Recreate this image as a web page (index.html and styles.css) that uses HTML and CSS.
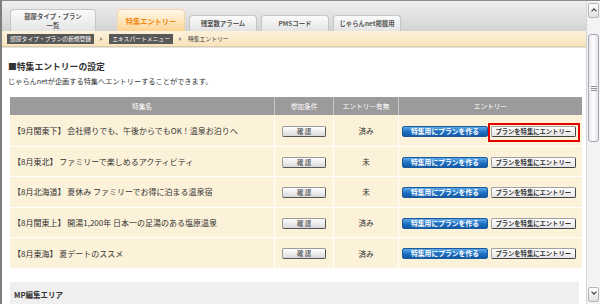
FILE: index.html
```html
<!DOCTYPE html>
<html lang="ja">
<head>
    <meta charset="UTF-8">
    <title>特集エントリー</title>
    <link rel="stylesheet" href="styles.css">
</head>
<body>
    <div class="window">
        <div class="page">
            <!-- 上部リンク (スクロールで一部隠れている) -->
            <div class="topline"><a href="#">ホームページへ　ログアウト</a></div>

            <!-- タブ -->
            <div class="tabs">
                <div class="tab tab-tall">部屋タイプ・プラン<br>一覧</div>
                <div class="tab tab-active">特集エントリー</div>
                <div class="tab">残室数アラーム</div>
                <div class="tab">PMSコード</div>
                <div class="tab">じゃらんnet掲載用</div>
            </div>

            <!-- パンくず -->
            <div class="crumbs">
                <span class="crumb">部屋タイプ・プランの新規登録</span>
                <span class="crumb-arrow"></span>
                <span class="crumb">エキスパートメニュー</span>
                <span class="crumb-arrow"></span>
                <span class="crumb-current">特集エントリー</span>
            </div>

            <div class="content">
                <h2 class="title">■特集エントリーの設定</h2>
                <p class="lead">じゃらんnetが企画する特集へエントリーすることができます。</p>

                <table class="entry-table">
                    <thead>
                        <tr>
                            <th class="col-name">特集名</th>
                            <th class="col-cond">参加条件</th>
                            <th class="col-status">エントリー有無</th>
                            <th class="col-entry">エントリー</th>
                        </tr>
                    </thead>
                    <tbody>
                        <tr>
                            <td class="name">【9月関東下】 会社帰りでも、午後からでもOK！温泉お泊りへ</td>
                            <td class="center"><button class="btn-check">確 認</button></td>
                            <td class="center">済み</td>
                            <td class="entry">
                                <button class="btn-blue">特集用にプランを作る</button>
                                <button class="btn-white highlight">プランを特集にエントリー</button>
                            </td>
                        </tr>
                        <tr>
                            <td class="name">【8月東北】 ファミリーで楽しめるアクティビティ</td>
                            <td class="center"><button class="btn-check">確 認</button></td>
                            <td class="center">未</td>
                            <td class="entry">
                                <button class="btn-blue">特集用にプランを作る</button>
                                <button class="btn-white">プランを特集にエントリー</button>
                            </td>
                        </tr>
                        <tr>
                            <td class="name">【8月北海道】 夏休み ファミリーでお得に泊まる温泉宿</td>
                            <td class="center"><button class="btn-check">確 認</button></td>
                            <td class="center">未</td>
                            <td class="entry">
                                <button class="btn-blue">特集用にプランを作る</button>
                                <button class="btn-white">プランを特集にエントリー</button>
                            </td>
                        </tr>
                        <tr>
                            <td class="name">【8月関東上】 開湯1,200年 日本一の足湯のある塩原温泉</td>
                            <td class="center"><button class="btn-check">確 認</button></td>
                            <td class="center">済み</td>
                            <td class="entry">
                                <button class="btn-blue">特集用にプランを作る</button>
                                <button class="btn-white">プランを特集にエントリー</button>
                            </td>
                        </tr>
                        <tr>
                            <td class="name">【8月東海】 夏デートのススメ</td>
                            <td class="center"><button class="btn-check">確 認</button></td>
                            <td class="center">済み</td>
                            <td class="entry">
                                <button class="btn-blue">特集用にプランを作る</button>
                                <button class="btn-white">プランを特集にエントリー</button>
                            </td>
                        </tr>
                    </tbody>
                </table>

                <div class="mp-area">MP編集エリア</div>
            </div>
        </div>

        <!-- スクロールバー -->
        <div class="scrollbar">
            <div class="sb-btn sb-up"></div>
            <div class="sb-track">
                <div class="sb-thumb"><span class="sb-grip"></span></div>
            </div>
            <div class="sb-btn sb-down"></div>
        </div>
    </div>
</body>
</html>
```

FILE: styles.css
```css
/* Genel */
body {
    margin: 0;
    padding: 0;
    overflow: hidden;
    font-family: "Noto Sans CJK JP", "Noto Sans", sans-serif;
    color: #333;
    background-color: #fff;
}

.window {
    display: flex;
    height: 304px;
    border-top: 1px solid #8a8a8a;
    border-left: 2px solid #7d7d7d;
    box-sizing: border-box;
}

.page {
    flex: 1;
    overflow: hidden;
    background: linear-gradient(#efefef, #d3d3d3) no-repeat;
    background-size: 100% 30px;
}

/* Üst link */
.topline {
    height: 3px;
    overflow: hidden;
    text-align: right;
    padding-right: 2px;
}

.topline a {
    display: inline-block;
    margin-top: -6px;
    font-size: 7px;
    line-height: 8px;
    color: #2a6fc9;
}

/* Sekmeler */
.tabs {
    display: flex;
    align-items: flex-end;
    gap: 4px;
    height: 27px;
    padding-left: 8px;
}

.tab {
    display: flex;
    align-items: center;
    justify-content: center;
    box-sizing: border-box;
    width: 68px;
    height: 16px;
    border: 1px solid #c6c6c6;
    border-bottom: none;
    border-radius: 4px 4px 0 0;
    background: linear-gradient(#fbfbfb, #e4e4e4);
    color: #555;
    font-size: 6.4px;
    font-weight: bold;
    text-align: center;
}

.tab-tall {
    width: 86px;
    height: 22px;
    line-height: 9px;
}

.tab-active {
    height: 22px;
    margin-left: 17px;
    border-color: #f1d6a6;
    background: linear-gradient(#fff8ea, #fcd494);
    color: #f28a12;
    font-size: 7.2px;
}

/* Breadcrumb */
.crumbs {
    display: flex;
    align-items: center;
    gap: 4px;
    height: 15px;
    padding-left: 5px;
    background: linear-gradient(#fcf1da, #f7e4bd);
    border-bottom: 1px solid #dccaa4;
}

.crumb {
    height: 10px;
    padding: 0 3px;
    background-color: #585858;
    color: #fff;
    font-size: 5.8px;
    line-height: 10px;
}

.crumb-arrow {
    width: 0;
    height: 0;
    margin: 0 2px;
    border-top: 2px solid transparent;
    border-bottom: 2px solid transparent;
    border-left: 3px solid #9a9a9a;
}

.crumb-current {
    font-size: 5.8px;
    color: #333;
}

/* İçerik */
.content {
    border-top: 1px solid #e2e2e2;
    padding: 0 0 0 6px;
    background-color: #fff;
}

.title {
    margin: 13px 0 0;
    font-size: 8.8px;
    line-height: 12px;
    font-weight: bold;
    color: #333;
}

.lead {
    margin: 2px 0 0;
    font-size: 7.2px;
    line-height: 12px;
}

/* Tablo */
.entry-table {
    width: 569px;
    margin: 10px 0 0 2px;
    border-collapse: separate;
    border-spacing: 0;
    table-layout: fixed;
}

.entry-table th {
    height: 18px;
    padding: 0;
    background-color: #9b9b9b;
    color: #fff;
    font-size: 6.7px;
    font-weight: normal;
    border-left: 1px solid #c9c9c9;
}

.entry-table th:first-child {
    border-left: none;
}

.col-name { width: 264px; }
.col-cond { width: 58px; }
.col-status { width: 64px; }
.col-entry { width: 183px; }

.entry-table td {
    height: 30.6px;
    padding: 0;
    box-sizing: border-box;
    background-color: #fcf1d9;
    border-top: 1px solid #fff;
    border-left: 1px solid #fff;
    font-size: 7.6px;
}

.entry-table td:first-child {
    border-left: none;
}

.entry-table tbody tr:first-child td {
    border-top: none;
}

.name {
    padding-left: 3px !important;
    font-size: 8px !important;
    white-space: nowrap;
}

.center {
    text-align: center;
}

.entry {
    padding-left: 3px !important;
    white-space: nowrap;
}

/* Düğmeler */
button {
    font-family: inherit;
    cursor: pointer;
    padding: 0;
    vertical-align: middle;
}

.btn-check {
    width: 44px;
    height: 11px;
    border: 1px solid #9a9a9a;
    border-right-color: #555;
    border-bottom-color: #555;
    border-radius: 2px;
    background: linear-gradient(#ffffff, #d9d9d9);
    color: #666;
    font-size: 6.4px;
    font-weight: bold;
    line-height: 9px;
}

.btn-blue {
    width: 86px;
    height: 11px;
    border: 1px solid #1a5a9c;
    border-radius: 2px;
    background: linear-gradient(#5fa9e8, #1d6fc0 55%, #1359a6);
    color: #fff;
    font-size: 6.8px;
    font-weight: bold;
    line-height: 9px;
}

.btn-white {
    position: relative;
    width: 85px;
    height: 11px;
    margin-left: 1px;
    border: 1px solid #a0a0a0;
    border-right-color: #444;
    border-bottom-color: #444;
    border-radius: 2px;
    background: linear-gradient(#ffffff, #e4e4e4);
    color: #333;
    font-size: 6.3px;
    font-weight: bold;
    line-height: 9px;
}

/* Kırmızı vurgu çerçevesi */
.highlight::after {
    content: "";
    position: absolute;
    left: -4px;
    top: -4px;
    right: -5px;
    bottom: -6px;
    border: 2px solid #e40000;
}

/* MP alanı */
.mp-area {
    width: 561px;
    margin: 14px 0 0 2px;
    padding: 7px 4px 0;
    height: 30px;
    background-color: #efefef;
    font-size: 7.5px;
    font-weight: bold;
    color: #333;
}

/* Kaydırma çubuğu */
.scrollbar {
    display: flex;
    flex-direction: column;
    width: 14px;
    background-color: #f3f3f3;
    border-left: 1px solid #d4d4d4;
    box-sizing: border-box;
}

.sb-btn {
    position: relative;
    height: 13px;
    margin: 2px 1px;
    border: 1px solid #b5b5b5;
    border-radius: 2px;
    background: linear-gradient(#ffffff, #e2e2e2);
}

.sb-up::after,
.sb-down::after {
    content: "";
    position: absolute;
    left: 3px;
    width: 3px;
    height: 3px;
    border-left: 1.5px solid #333;
    border-top: 1.5px solid #333;
}

.sb-up::after {
    top: 5px;
    transform: rotate(45deg);
}

.sb-down::after {
    top: 2px;
    transform: rotate(225deg);
}

.sb-track {
    flex: 1;
    padding: 14px 1px 0;
}

.sb-thumb {
    display: flex;
    align-items: center;
    justify-content: center;
    height: 106px;
    border: 1px solid #a9a9b5;
    border-radius: 3px;
    background: linear-gradient(90deg, #e8e8ee, #fdfdfd 50%, #e2e2e8);
}

.sb-grip {
    width: 6px;
    height: 5px;
    background: repeating-linear-gradient(#8e8e9a 0 1px, transparent 1px 2px);
}
```
